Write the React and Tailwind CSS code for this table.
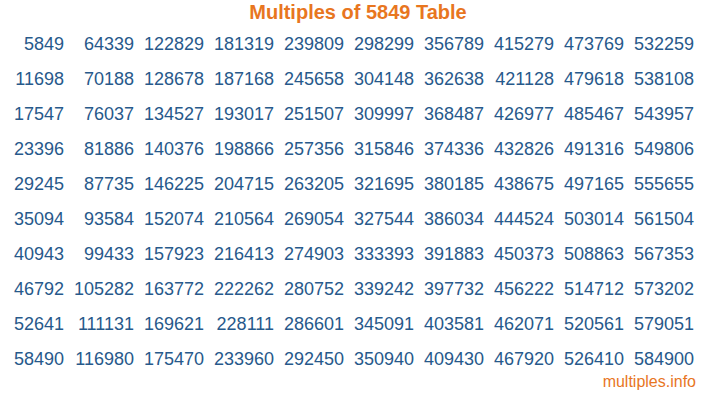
export default function App() {
  const base = 5849;
  const rows = [];
  for (let r = 0; r < 10; r++) {
    for (let c = 0; c < 10; c++) {
      rows.push(base * (c * 10 + r + 1));
    }
  }
  return (
    <div className="w-[716px] h-[400px] bg-white flex flex-col" style={{ fontFamily: '"Liberation Sans", Arial, sans-serif' }}>
      <div className="h-[24px] leading-[24px] text-center text-[20px] font-bold text-[#e8761f]">
        Multiples of 5849 Table
      </div>
      <div className="mt-[3px] w-[700px] grid grid-cols-10">
        {rows.map((v, i) => (
          <div key={i} className="h-[35px] leading-[35px] text-right pr-[6px] text-[18px] text-[#27598b]">
            {v}
          </div>
        ))}
      </div>
      <div className="-mt-[4px] h-[18px] leading-[18px] text-right pr-[20px] text-[16px] text-[#e8761f]">
        multiples.info
      </div>
    </div>
  );
}
